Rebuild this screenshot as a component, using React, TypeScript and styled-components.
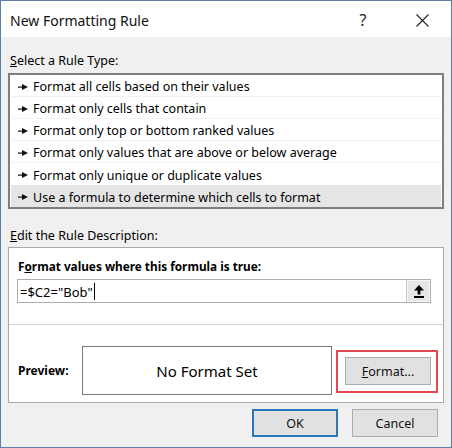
import React from "react";
import styled, { createGlobalStyle } from "styled-components";

const Global = createGlobalStyle`
  html, body { margin: 0; padding: 0; background: #ffffff; }
  * { box-sizing: border-box; }
`;

const FONT = `"Segoe UI", "Noto Sans", "Open Sans", sans-serif`;

const Window = styled.div`
  width: 452px;
  height: 448px;
  border: 1px solid #5d7fa6;
  display: flex;
  flex-direction: column;
  font-family: ${FONT};
  font-size: 12.5px;
  color: #000;
  background: #f0f0f0;
`;

const TitleBar = styled.div`
  height: 36px;
  background: #ffffff;
  display: flex;
  align-items: center;
  padding-left: 9px;
  flex-shrink: 0;
`;

const Title = styled.div`
  flex: 1;
  font-size: 14px;
  color: #111;
  padding-top: 2px;
`;

const TitleButton = styled.div<{ $w: number }>`
  width: ${(p) => p.$w}px;
  height: 36px;
  display: flex;
  align-items: center;
  justify-content: center;
  font-size: 16px;
  color: #222;
  padding-top: 2px;
`;

const Body = styled.div`
  flex: 1;
  display: flex;
  flex-direction: column;
  padding: 15px 7px 0 7px;
`;

const SectionLabel = styled.div<{ $gap: number }>`
  height: 16px;
  line-height: 16px;
  padding: 1px 0 0 2px;
  margin-bottom: ${(p) => p.$gap}px;
`;

const List = styled.div`
  height: 136px;
  border: 2px solid #7f7f7f;
  background: #ffffff;
  display: grid;
  grid-template-rows: repeat(6, 1fr);
  padding: 0 1px;
  margin-bottom: 18px;
`;

const Row = styled.div<{ $selected?: boolean; $last?: boolean }>`
  display: flex;
  align-items: center;
  gap: 5px;
  padding: 2px 0 0 7px;
  background: ${(p) => (p.$selected ? "#e5e5e5" : "#ffffff")};
  border-bottom: ${(p) => (p.$last ? "none" : "1px solid #f2f2f2")};
`;

const DescBox = styled.div`
  height: 156px;
  border: 1px solid #a9a9a9;
  background: #ffffff;
  display: flex;
  flex-direction: column;
`;

const FormulaArea = styled.div`
  padding: 9px 12px 0 8px;
  height: 77px;
  border-bottom: 1px solid #d5d5d5;
`;

const BoldLabel = styled.div`
  font-weight: 700;
  font-size: 11.8px;
  height: 16px;
  line-height: 16px;
  padding: 1px 0 0 1px;
  margin-bottom: 6px;
`;

const Input = styled.div`
  height: 24px;
  border: 1px solid #adadad;
  display: flex;
  align-items: center;
  padding-left: 2px;
  font-size: 13px;
`;

const InputText = styled.div`
  flex: 1;
  display: flex;
  align-items: center;
  padding-top: 1px;
`;

const Caret = styled.span`
  display: inline-block;
  width: 1px;
  height: 17px;
  background: #000;
  margin-left: 1px;
`;

const CollapseButton = styled.div`
  width: 24px;
  height: 22px;
  background: #e6e6e6;
  border-left: 1px solid #c4c4c4;
  box-shadow: inset 0 0 0 1px #f7f7f7;
  display: flex;
  align-items: center;
  justify-content: center;
`;

const PreviewArea = styled.div`
  flex: 1;
  display: flex;
  align-items: flex-start;
  padding: 21px 0 0 9px;
`;

const PreviewLabel = styled.div`
  font-weight: 700;
  font-size: 12px;
  width: 64px;
  height: 49px;
  display: flex;
  align-items: center;
`;

const PreviewBox = styled.div`
  width: 250px;
  height: 49px;
  border: 1px solid #7a7a7a;
  display: flex;
  align-items: center;
  justify-content: center;
  font-size: 15px;
`;

const Highlight = styled.div`
  margin: 4px 0 0 4px;
  width: 102px;
  height: 43px;
  border: 2px solid #e0474f;
  padding: 5px 0 0 7px;
`;

const Button = styled.div<{ $primary?: boolean }>`
  width: 86px;
  height: 28px;
  background: #e1e1e1;
  border: ${(p) => (p.$primary ? "2px solid #2a78bb" : "1px solid #adadad")};
  display: flex;
  align-items: center;
  justify-content: center;
  font-size: 12.5px;
  color: #111;
  padding-top: 1px;
`;

const ButtonRow = styled.div`
  display: flex;
  justify-content: flex-end;
  gap: 14px;
  padding: 6px 6px 0 0;
`;

const Pointer = () => (
  <svg width="10" height="6" viewBox="0 0 10 6">
    <rect x="0" y="2.5" width="5" height="1.2" fill="#111" />
    <polygon points="4,0 10,3 4,6" fill="#111" />
  </svg>
);

const UpIcon = () => (
  <svg width="10" height="13" viewBox="0 0 10 13">
    <polygon points="5,0 10,5.5 0,5.5" fill="#000" />
    <rect x="3.6" y="5" width="2.8" height="4.5" fill="#000" />
    <rect x="0" y="11" width="10" height="2" fill="#000" />
  </svg>
);

const CloseIcon = () => (
  <svg width="13" height="13" viewBox="0 0 13 13">
    <path d="M0.5 0.5 L12.5 12.5 M12.5 0.5 L0.5 12.5" stroke="#222" strokeWidth="1.1" />
  </svg>
);

const rules = [
  "Format all cells based on their values",
  "Format only cells that contain",
  "Format only top or bottom ranked values",
  "Format only values that are above or below average",
  "Format only unique or duplicate values",
  "Use a formula to determine which cells to format",
];

export default function App() {
  return (
    <>
      <Global />
      <Window>
        <TitleBar>
          <Title>New Formatting Rule</Title>
          <TitleButton $w={60}>?</TitleButton>
          <TitleButton $w={58}>
            <CloseIcon />
          </TitleButton>
        </TitleBar>
        <Body>
          <SectionLabel $gap={5}>
            <u>S</u>elect a Rule Type:
          </SectionLabel>
          <List>
            {rules.map((r, i) => (
              <Row key={r} $selected={i === 5} $last={i >= 4}>
                <Pointer />
                <span>{r}</span>
              </Row>
            ))}
          </List>
          <SectionLabel $gap={4}>
            <u>E</u>dit the Rule Description:
          </SectionLabel>
          <DescBox>
            <FormulaArea>
              <BoldLabel>
                F<u>o</u>rmat values where this formula is true:
              </BoldLabel>
              <Input>
                <InputText>
                  =$C2="Bob"
                  <Caret />
                </InputText>
                <CollapseButton>
                  <UpIcon />
                </CollapseButton>
              </Input>
            </FormulaArea>
            <PreviewArea>
              <PreviewLabel>Preview:</PreviewLabel>
              <PreviewBox>No Format Set</PreviewBox>
              <Highlight>
                <Button>
                  <u>F</u>ormat...
                </Button>
              </Highlight>
            </PreviewArea>
          </DescBox>
          <ButtonRow>
            <Button $primary>OK</Button>
            <Button>Cancel</Button>
          </ButtonRow>
        </Body>
      </Window>
    </>
  );
}
